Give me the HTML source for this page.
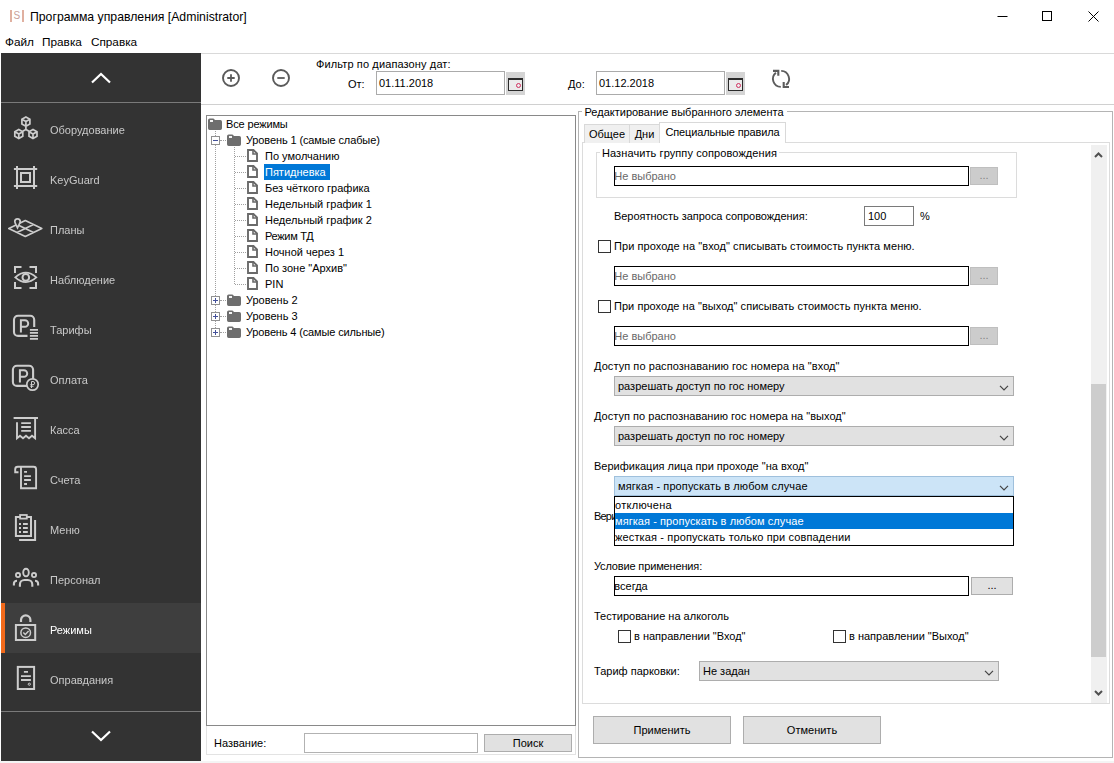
<!DOCTYPE html>
<html><head><meta charset="utf-8">
<style>
*{box-sizing:border-box;margin:0;padding:0}
html,body{width:1114px;height:763px;overflow:hidden;background:#fff}
body{font-family:"Liberation Sans",sans-serif;font-size:11px;color:#000;position:relative}
.a{position:absolute;white-space:pre}
.t{position:absolute;white-space:pre;line-height:14px;height:14px}
#sb{position:absolute;left:1px;top:53px;width:200px;height:708px;background:#333}
.si{position:absolute;left:0;width:200px;height:50px}
.si span{will-change:transform;position:absolute;left:49px;top:20px;line-height:14px;color:#c9c9c9;font-size:11px;white-space:pre}
.si svg{position:absolute;left:9px;top:9px;width:32px;height:32px;overflow:visible;fill:none;stroke:#cdcdcd;stroke-width:1.6}
.si.sel{background:#3e3e3e}
.si.sel span{color:#fff}
.hl{position:absolute;height:1px;background:#7a7a7a;left:0;width:200px}
.inp{position:absolute;border:1px solid #000;background:#fff;height:20px;line-height:18px;padding-left:0;text-indent:-.7px;color:#686868;white-space:pre}
.btn{position:absolute;background:#e1e1e1;border:1px solid #adadad;text-align:center;white-space:pre}
.dbtn{position:absolute;background:#ccc;border:1px solid #bfbfbf;color:#838383;text-align:center;line-height:15px;width:28px;height:18px}
.cmb{position:absolute;background:#e1e1e1;border:1px solid #adadad;height:20px;line-height:18px;padding-left:3px;white-space:pre}
.cmb svg{position:absolute;right:4px;top:8px}
.cb{position:absolute;width:13px;height:13px;border:1px solid #333;background:#fff}
.tr{position:absolute;white-space:pre;line-height:16px;height:16px}
.fo{position:absolute;width:14px;height:12px}
.fi{position:absolute;width:11px;height:13px}
.ex{position:absolute;width:9px;height:9px;border:1px solid #919191;background:#fff}
.ex:before{content:"";position:absolute;left:1px;top:3px;width:5px;height:1px;background:#44519a}
.ex.p:after{content:"";position:absolute;left:3px;top:1px;width:1px;height:5px;background:#44519a}
.dv{position:absolute;width:0;border-left:1px dotted #a0a0a0}
.dh{position:absolute;height:0;border-top:1px dotted #a0a0a0}
.cal{width:19px;height:23px;background:#d4d4d4}
.cal:before{content:"";position:absolute;left:2px;top:6px;width:13px;height:10px;border:1px solid #2b2b2b;border-top-width:2px;background:#ececec}
.cal:after{content:"";position:absolute;left:9.500px;top:10.500px;width:3.500px;height:3.500px;border:1px solid #d03060;border-radius:50%}
</style></head><body>
<!-- title bar -->
<div class="a" style="left:10px;top:10px;width:2px;height:12px;background:#e0b0a0"></div>
<div class="a" style="left:22px;top:10px;width:2px;height:12px;background:#e0b0a0"></div>
<div class="a" style="left:13.5px;top:9.500px;font-size:10px;line-height:12px;color:#c9a09a">S</div>
<div class="a" id="title" style="left:30px;top:9px;font-size:12.25px;line-height:16px">Программа управления [Administrator]</div>
<svg class="a" style="left:990px;top:0;width:124px;height:31px" viewBox="0 0 124 31">
<path d="M7.5 16.5h10" stroke="#000" stroke-width="1" fill="none"/>
<rect x="52.5" y="11.5" width="9" height="9" stroke="#000" stroke-width="1" fill="none"/>
<path d="M98.500 11.500l10 10M108.500 11.500l-10 10" stroke="#000" stroke-width="1" fill="none"/>
</svg>
<div class="a" id="menu" style="left:5px;top:34px;font-size:11.8px;line-height:16px"><span>Файл</span><span style="margin-left:8px">Правка</span><span style="margin-left:9px">Справка</span></div>
<div class="a" style="left:201px;top:53px;width:913px;height:1px;background:#d9d9d9"></div>
<div class="a" style="left:0;top:761px;width:1114px;height:2px;background:#f4f4f4"></div>

<div id="sb">
<svg class="a" style="left:87px;top:18px;width:26px;height:14px" viewBox="0 0 26 14"><path d="M4 11.500l9-8.500l9 8.500" fill="none" stroke="#fff" stroke-width="2.200"/></svg>
<div class="hl" style="top:49px"></div>
<div class="si" style="top:50px"><!--ICON:Оборудование--><svg viewBox="0 0 32 32"><path d="M15.9 5.0 L19.9 7.3 L19.9 11.9 L15.9 14.2 L11.9 11.9 L11.9 7.3Z M15.9 9.6V14.2 M15.9 9.6L11.9 7.3 M15.9 9.6L19.9 7.3 M8.8 17.4 L12.8 19.7 L12.8 24.3 L8.8 26.6 L4.8 24.3 L4.8 19.7Z M8.8 22.0V26.6 M8.8 22.0L4.8 19.7 M8.8 22.0L12.8 19.7 M23.0 17.4 L27.0 19.7 L27.0 24.3 L23.0 26.6 L19.0 24.3 L19.0 19.7Z M23.0 22.0V26.6 M23.0 22.0L19.0 19.7 M23.0 22.0L27.0 19.7 M15.9 14.200V17.500L12.200 19.600M15.900 17.500L19.600 19.600" stroke-width="1.700"/></svg><!--/ICON--><span>Оборудование</span></div>
<div class="si" style="top:100px"><!--ICON:KeyGuard--><svg viewBox="0 0 32 32"><path d="M3.900 7H27.200M3.900 24H27.200M7 3.900V26.900M24 3.900V26.900" stroke-width="2"/><rect x="11" y="11" width="9" height="9" stroke-width="2"/></svg><!--/ICON--><span>KeyGuard</span></div>
<div class="si" style="top:150px"><!--ICON:Планы--><svg viewBox="0 0 32 32"><path d="M-1.200 16.500L15.300 8.600L31.800 16.500L15.300 24.400ZM7 20.500L23.500 12.500M7 12.500L23.500 20.500" stroke-width="1.700" stroke-linejoin="round"/><path d="M7.500 15.800C6 12.500 4.800 11.200 4.800 9.600a2.700 2.700 0 0 1 5.400 0C10.200 11.200 9 12.500 7.500 15.800Z" fill="#333" stroke-width="1.700"/></svg><!--/ICON--><span>Планы</span></div>
<div class="si" style="top:200px"><!--ICON:Наблюдение--><svg viewBox="0 0 32 32"><path d="M5 11V5H11.500M19.500 5H26V11M26 20V26H19.500M11.500 26H5V20" stroke-width="2"/><path d="M5.300 15.400Q10.500 10.700 15.800 10.700Q21 10.700 26.300 15.400Q21 20.100 15.800 20.100Q10.500 20.100 5.300 15.400Z" stroke-width="1.800" fill="#333"/><circle cx="15.800" cy="15.400" r="3.300" stroke-width="2"/></svg><!--/ICON--><span>Наблюдение</span></div>
<div class="si" style="top:250px"><!--ICON:Тарифы--><svg viewBox="0 0 32 32"><path d="M17.500 23.900H8A4 4 0 0 1 4 19.900V7.700A4 4 0 0 1 8 3.700H20.200A4 4 0 0 1 24.200 7.700V15" stroke-width="2.100"/><path d="M10.900 20.600V8.200H14.900a3.300 3.300 0 0 1 0 6.600H10.900" stroke-width="2"/><path d="M19.900 17.800H28M19.900 20.800H28M19.900 23.800H28M19.900 26.800H28" stroke-width="1.800"/></svg><!--/ICON--><span>Тарифы</span></div>
<div class="si" style="top:300px"><!--ICON:Оплата--><svg viewBox="0 0 32 32"><rect x="2.900" y="3.700" width="20.200" height="20.200" rx="4" stroke-width="2.100"/><path d="M9.900 20.600V8.200H13.900a3.300 3.300 0 0 1 0 6.600H9.900" stroke-width="2"/><circle cx="22.500" cy="22.500" r="5.700" fill="#333" stroke-width="1.700"/><path d="M21.500 26V19.500H23a1.600 1.600 0 0 1 0 3.200H20.300M20.300 24.300H23.500" stroke-width="1"/></svg><!--/ICON--><span>Оплата</span></div>
<div class="si" style="top:350px"><!--ICON:Касса--><svg viewBox="0 0 32 32"><path d="M3.600 6H28" stroke-width="2"/><path d="M7 10.200V26.200L10 23.700L13 26.200L16 23.700L19 26.200L22 23.700L25.100 26.200V6" stroke-width="1.900" stroke-linejoin="miter"/><path d="M11.200 11.200H20.900M11.200 15H20.900M11.200 18.900H20.900" stroke-width="1.800"/></svg><!--/ICON--><span>Касса</span></div>
<div class="si" style="top:400px"><!--ICON:Счета--><svg viewBox="0 0 32 32"><path d="M8.500 10.200H5.200V7.200Q5.200 4.700 7.700 4.700H23.600Q26.100 4.700 26.100 7.200V26.200H11V4.700" stroke-width="1.900"/><path d="M14.100 9.900H17M14.100 14.100H20.900M14.100 18H20.900M14.100 22H17" stroke-width="1.800"/></svg><!--/ICON--><span>Счета</span></div>
<div class="si" style="top:450px"><!--ICON:Меню--><svg viewBox="0 0 32 32"><path d="M10.100 4.900H5.900V23.900H21V4.900H16.800" stroke-width="2"/><rect x="10.100" y="3" width="6.700" height="3.600" stroke-width="1.800"/><path d="M25.100 8V28H9.100" stroke-width="2"/><path d="M9 12H11M13 12H17.800M9 16H11M13 16H17.800M9 20H11M13 20H17.800" stroke-width="1.900"/></svg><!--/ICON--><span>Меню</span></div>
<div class="si" style="top:500px"><!--ICON:Персонал--><svg viewBox="0 0 32 32"><ellipse cx="16" cy="10.500" rx="2.800" ry="3.800" stroke-width="1.900"/><circle cx="8" cy="13.100" r="2.100" stroke-width="1.800"/><circle cx="24" cy="13.100" r="2.100" stroke-width="1.800"/><path d="M9.900 24.700V22.500a4.500 4.500 0 0 1 4.500-4.500h3.400a4.500 4.500 0 0 1 4.500 4.500V24.700" stroke-width="2.100"/><path d="M3.900 23.400V21.800a3.100 3.100 0 0 1 3.100-3.100M28.100 23.400V21.800a3.100 3.100 0 0 0-3.100-3.100" stroke-width="2.100"/></svg><!--/ICON--><span>Персонал</span></div>
<div class="si sel" style="top:550px"><!--ICON:Режимы--><svg viewBox="0 0 32 32"><path d="M11 10V8a4.700 4.700 0 0 1 9.400 0V10" stroke-width="2.200"/><rect x="5.900" y="13" width="19.300" height="15" stroke-width="2"/><circle cx="15.700" cy="20.700" r="4.800" stroke-width="1.500"/><path d="M13.300 20.400l2 2l3.300-3.400" stroke-width="1.400"/></svg><!--/ICON--><span>Режимы</span></div>
<div class="si" style="top:600px"><!--ICON:Оправдания--><svg viewBox="0 0 32 32"><rect x="7.800" y="4.900" width="16.300" height="22.100" stroke-width="2"/><path d="M13.900 9.900H18M11 14.100H20.900M11 18H20.900" stroke-width="1.900"/><circle cx="19.300" cy="22.200" r="1.100" stroke-width="1"/></svg><!--/ICON--><span>Оправдания</span></div>
<div class="a" style="left:0;top:550px;width:4px;height:50px;background:#f26a1b"></div>
<div class="hl" style="top:658px"></div>
<svg class="a" style="left:87px;top:676px;width:26px;height:14px" viewBox="0 0 26 14"><path d="M4 2.500l9 8.500l9-8.500" fill="none" stroke="#fff" stroke-width="2.200"/></svg>
</div>
<!-- toolbar -->
<svg class="a" style="left:220px;top:67px;width:22px;height:22px" viewBox="0 0 22 22"><circle cx="11" cy="11" r="8" fill="none" stroke="#5a5a5a" stroke-width="1.900"/><path d="M7.300 11h7.400M11 7.300v7.400" stroke="#5a5a5a" stroke-width="1.800"/></svg>
<svg class="a" style="left:270px;top:67px;width:22px;height:22px" viewBox="0 0 22 22"><circle cx="11" cy="11" r="8" fill="none" stroke="#5a5a5a" stroke-width="1.900"/><path d="M7.300 11h7.400" stroke="#5a5a5a" stroke-width="1.800"/></svg>
<div class="t" style="left:316px;top:57px;letter-spacing:.12px">Фильтр по диапазону дат:</div>
<div class="t" style="left:348px;top:77px">От:</div>
<div class="a" style="left:376px;top:71px;width:129px;height:24px;border:1px solid #ababab;background:#fff;line-height:22px;padding-left:2px">01.11.2018</div>
<div class="a cal" style="left:506px;top:72px"></div>
<div class="t" style="left:568px;top:77px">До:</div>
<div class="a" style="left:596px;top:71px;width:129px;height:24px;border:1px solid #ababab;background:#fff;line-height:22px;padding-left:2px">01.12.2018</div>
<div class="a cal" style="left:726px;top:72px"></div>
<svg class="a" style="left:770px;top:68px;width:22px;height:22px" viewBox="0 0 22 22" fill="none" stroke="#5c5c5c" stroke-width="1.900"><path d="M10.800 18.900A8 8 0 0 1 5.900 4.700"/><path d="M11.200 2.900A8 8 0 0 1 16.100 17.100"/><path d="M3 2.900H8.300V7.800" stroke-width="2.100"/><path d="M19 19H13.700V14.100" stroke-width="2.100"/></svg>
<div class="a" style="left:201px;top:104px;width:913px;height:1px;background:#d0d0d0"></div>

<!-- tree -->
<div class="a" style="left:206px;top:115px;width:370px;height:611px;border:1px solid #898989;background:#fff"></div>
<svg class="fo" style="left:208px;top:118px" viewBox="0 0 14 12"><path d="M0 2.200Q0 .5 1.700 .5H5.200Q6.500 .5 6.800 2H12.300Q14 2 14 3.700V10.300Q14 12 12.300 12H1.700Q0 12 0 10.300Z" fill="#6e6e6e"/><rect x="2" y="2" width="3" height="2" fill="#f4f4f4"/></svg>
<div class="tr" style="left:226px;top:116px;letter-spacing:-.15px">Все режимы</div>
<div class="dv" style="left:215px;top:131px;height:201px"></div>
<div class="dh" style="left:220px;top:140px;width:8px"></div>
<div class="ex" style="left:211px;top:136px"></div>
<svg class="fo" style="left:227px;top:134px" viewBox="0 0 14 12"><path d="M0 2.200Q0 .5 1.700 .5H5.200Q6.500 .5 6.800 2H12.300Q14 2 14 3.700V10.300Q14 12 12.300 12H1.700Q0 12 0 10.300Z" fill="#6e6e6e"/><rect x="2" y="2" width="3" height="2" fill="#f4f4f4"/></svg>
<div class="tr" style="left:246px;top:132px;letter-spacing:-.12px">Уровень 1 (самые слабые)</div>
<div class="dh" style="left:220px;top:300px;width:8px"></div>
<div class="ex p" style="left:211px;top:296px"></div>
<svg class="fo" style="left:227px;top:294px" viewBox="0 0 14 12"><path d="M0 2.200Q0 .5 1.700 .5H5.200Q6.500 .5 6.800 2H12.300Q14 2 14 3.700V10.300Q14 12 12.300 12H1.700Q0 12 0 10.300Z" fill="#6e6e6e"/><rect x="2" y="2" width="3" height="2" fill="#f4f4f4"/></svg>
<div class="tr" style="left:246px;top:292px">Уровень 2</div>
<div class="dh" style="left:220px;top:316px;width:8px"></div>
<div class="ex p" style="left:211px;top:312px"></div>
<svg class="fo" style="left:227px;top:310px" viewBox="0 0 14 12"><path d="M0 2.200Q0 .5 1.700 .5H5.200Q6.500 .5 6.800 2H12.300Q14 2 14 3.700V10.300Q14 12 12.300 12H1.700Q0 12 0 10.300Z" fill="#6e6e6e"/><rect x="2" y="2" width="3" height="2" fill="#f4f4f4"/></svg>
<div class="tr" style="left:246px;top:308px">Уровень 3</div>
<div class="dh" style="left:220px;top:332px;width:8px"></div>
<div class="ex p" style="left:211px;top:328px"></div>
<svg class="fo" style="left:227px;top:326px" viewBox="0 0 14 12"><path d="M0 2.200Q0 .5 1.700 .5H5.200Q6.500 .5 6.800 2H12.300Q14 2 14 3.700V10.300Q14 12 12.300 12H1.700Q0 12 0 10.300Z" fill="#6e6e6e"/><rect x="2" y="2" width="3" height="2" fill="#f4f4f4"/></svg>
<div class="tr" style="left:246px;top:324px;letter-spacing:-.14px">Уровень 4 (самые сильные)</div>
<div class="dv" style="left:234px;top:147px;height:137px"></div>
<div class="dh" style="left:235px;top:156px;width:11px"></div>
<svg class="fi" style="left:247px;top:149px" viewBox="0 0 11 13"><path d="M1 1H6.500L10 4.500V12H1Z" fill="#fff" stroke="#6a6a6a" stroke-width="1.900"/><path d="M6 1V5H10" fill="none" stroke="#6a6a6a" stroke-width="1.600"/></svg>
<div class="tr" style="left:265px;top:148px">По умолчанию</div>
<div class="dh" style="left:235px;top:172px;width:11px"></div>
<svg class="fi" style="left:247px;top:165px" viewBox="0 0 11 13"><path d="M1 1H6.500L10 4.500V12H1Z" fill="#fff" stroke="#6a6a6a" stroke-width="1.900"/><path d="M6 1V5H10" fill="none" stroke="#6a6a6a" stroke-width="1.600"/></svg>
<div class="tr" style="left:264px;top:164px;width:66px;background:#0078d7;color:#fff;padding-left:1px">Пятидневка</div>
<div class="dh" style="left:235px;top:188px;width:11px"></div>
<svg class="fi" style="left:247px;top:181px" viewBox="0 0 11 13"><path d="M1 1H6.500L10 4.500V12H1Z" fill="#fff" stroke="#6a6a6a" stroke-width="1.900"/><path d="M6 1V5H10" fill="none" stroke="#6a6a6a" stroke-width="1.600"/></svg>
<div class="tr" style="left:265px;top:180px">Без чёткого графика</div>
<div class="dh" style="left:235px;top:204px;width:11px"></div>
<svg class="fi" style="left:247px;top:197px" viewBox="0 0 11 13"><path d="M1 1H6.500L10 4.500V12H1Z" fill="#fff" stroke="#6a6a6a" stroke-width="1.900"/><path d="M6 1V5H10" fill="none" stroke="#6a6a6a" stroke-width="1.600"/></svg>
<div class="tr" style="left:265px;top:196px">Недельный график 1</div>
<div class="dh" style="left:235px;top:220px;width:11px"></div>
<svg class="fi" style="left:247px;top:213px" viewBox="0 0 11 13"><path d="M1 1H6.500L10 4.500V12H1Z" fill="#fff" stroke="#6a6a6a" stroke-width="1.900"/><path d="M6 1V5H10" fill="none" stroke="#6a6a6a" stroke-width="1.600"/></svg>
<div class="tr" style="left:265px;top:212px">Недельный график 2</div>
<div class="dh" style="left:235px;top:236px;width:11px"></div>
<svg class="fi" style="left:247px;top:229px" viewBox="0 0 11 13"><path d="M1 1H6.500L10 4.500V12H1Z" fill="#fff" stroke="#6a6a6a" stroke-width="1.900"/><path d="M6 1V5H10" fill="none" stroke="#6a6a6a" stroke-width="1.600"/></svg>
<div class="tr" style="left:265px;top:228px;letter-spacing:-.3px">Режим ТД</div>
<div class="dh" style="left:235px;top:252px;width:11px"></div>
<svg class="fi" style="left:247px;top:245px" viewBox="0 0 11 13"><path d="M1 1H6.500L10 4.500V12H1Z" fill="#fff" stroke="#6a6a6a" stroke-width="1.900"/><path d="M6 1V5H10" fill="none" stroke="#6a6a6a" stroke-width="1.600"/></svg>
<div class="tr" style="left:265px;top:244px">Ночной через 1</div>
<div class="dh" style="left:235px;top:268px;width:11px"></div>
<svg class="fi" style="left:247px;top:261px" viewBox="0 0 11 13"><path d="M1 1H6.500L10 4.500V12H1Z" fill="#fff" stroke="#6a6a6a" stroke-width="1.900"/><path d="M6 1V5H10" fill="none" stroke="#6a6a6a" stroke-width="1.600"/></svg>
<div class="tr" style="left:265px;top:260px">По зоне "Архив"</div>
<div class="dh" style="left:235px;top:284px;width:11px"></div>
<svg class="fi" style="left:247px;top:277px" viewBox="0 0 11 13"><path d="M1 1H6.500L10 4.500V12H1Z" fill="#fff" stroke="#6a6a6a" stroke-width="1.900"/><path d="M6 1V5H10" fill="none" stroke="#6a6a6a" stroke-width="1.600"/></svg>
<div class="tr" style="left:265px;top:276px">PIN</div>
<div class="a" style="left:206px;top:726px;width:370px;height:29px;border:1px solid #e3e3e3;border-top:none"></div>
<div class="t" style="left:214px;top:736px">Название:</div>
<div class="a" style="left:304px;top:733px;width:174px;height:20px;border:1px solid #b2b2b2;background:#fff"></div>
<div class="btn" style="left:484px;top:734px;width:88px;height:18px;line-height:16px">Поиск</div>
<!-- right group -->
<div class="a" style="left:578px;top:111px;width:535px;height:647px;border:1px solid #a0a0a0;border-color:#b4b4b4"></div>
<div class="t" style="left:581.500px;top:105px;background:#fff;padding:0 3px 0 3px">Редактирование выбранного элемента</div>
<!-- tabs -->
<div class="a" style="left:582px;top:142px;width:528px;height:562px;border:1px solid #dcdcdc;background:#fff"></div>
<div class="a" style="left:584px;top:124px;width:46px;height:19px;background:#f0f0f0;border:1px solid #d9d9d9;border-bottom:none;text-align:center;line-height:18px">Общее</div>
<div class="a" style="left:629px;top:124px;width:31px;height:19px;background:#f0f0f0;border:1px solid #d9d9d9;border-bottom:none;text-align:center;line-height:18px">Дни</div>
<div class="a" style="left:659px;top:122px;width:127px;height:21px;background:#fff;border:1px solid #d9d9d9;border-bottom:none;text-align:center;line-height:18px;letter-spacing:-.13px">Специальные правила</div>
<!-- scrollbar -->
<div class="a" style="left:1091px;top:145px;width:16px;height:558px;background:#f0f0f0"></div>
<div class="a" style="left:1091px;top:384px;width:15px;height:273px;background:#cdcdcd"></div>
<svg class="a" style="left:1094px;top:151px;width:9px;height:8px" viewBox="0 0 9 8"><path d="M1 6l3.500-3.500l3.500 3.500" fill="none" stroke="#505050" stroke-width="2"/></svg>
<svg class="a" style="left:1094px;top:689px;width:9px;height:8px" viewBox="0 0 9 8"><path d="M1 2l3.500 3.500l3.500-3.500" fill="none" stroke="#505050" stroke-width="2"/></svg>
<!-- inner group -->
<div class="a" style="left:596px;top:152px;width:421px;height:46px;border:1px solid #dcdcdc"></div>
<div class="t" style="left:600px;top:146px;background:#fff;padding:0 2px;letter-spacing:.09px">Назначить группу сопровождения</div>
<div class="inp" style="left:614px;top:166px;width:355px">Не выбрано</div>
<div class="dbtn" style="left:970px;top:167px">...</div>
<div class="t" style="left:614px;top:209px;letter-spacing:-.04px">Вероятность запроса сопровождения:</div>
<div class="a" style="left:864px;top:206px;width:50px;height:20px;border:1px solid #7a7a7a;background:#fff;line-height:18px;padding-left:3px">100</div>
<div class="t" style="left:920px;top:209px">%</div>
<div class="cb" style="left:598px;top:240px"></div>
<div class="t" style="left:614px;top:239px;letter-spacing:.06px">При проходе на "вход" списывать стоимость пункта меню.</div>
<div class="inp" style="left:614px;top:266px;width:355px">Не выбрано</div>
<div class="dbtn" style="left:970px;top:267px">...</div>
<div class="cb" style="left:598px;top:300px"></div>
<div class="t" style="left:614px;top:299px;letter-spacing:.04px">При проходе на "выход" списывать стоимость пункта меню.</div>
<div class="inp" style="left:614px;top:326px;width:355px">Не выбрано</div>
<div class="dbtn" style="left:970px;top:327px">...</div>
<div class="t" style="left:594px;top:359px;letter-spacing:.07px">Доступ по распознаванию гос номера на "вход"</div>
<div class="cmb" style="left:614px;top:376px;width:400px">разрешать доступ по гос номеру<svg width="10" height="6" viewBox="0 0 10 6"><path d="M1 .8l4 4l4-4" fill="none" stroke="#444" stroke-width="1.200"/></svg></div>
<div class="t" style="left:594px;top:409px;letter-spacing:.03px">Доступ по распознаванию гос номера на "выход"</div>
<div class="cmb" style="left:614px;top:426px;width:400px">разрешать доступ по гос номеру<svg width="10" height="6" viewBox="0 0 10 6"><path d="M1 .8l4 4l4-4" fill="none" stroke="#444" stroke-width="1.200"/></svg></div>
<div class="t" style="left:594px;top:459px">Верификация лица при проходе "на вход"</div>
<div class="cmb" style="left:614px;top:476px;width:400px;background:#cce4f7;border-color:#9fc0dc;letter-spacing:.1px">мягкая - пропускать в любом случае<svg width="10" height="6" viewBox="0 0 10 6"><path d="M1 .8l4 4l4-4" fill="none" stroke="#444" stroke-width="1.200"/></svg></div>
<div class="t" style="left:594px;top:509px;letter-spacing:-.8px">Вери</div>
<!-- dropdown list -->
<div class="a" style="left:614px;top:496px;width:400px;height:50px;border:1px solid #000;background:#fff"></div>
<div class="a" style="left:615px;top:497px;height:16px;line-height:16px;letter-spacing:.3px">отключена</div>
<div class="a" style="left:615px;top:513px;width:398px;height:16px;line-height:16px;background:#0078d7;color:#fff;letter-spacing:.07px">мягкая - пропускать в любом случае</div>
<div class="a" style="left:615px;top:529px;height:16px;line-height:16px;letter-spacing:.14px">жесткая - пропускать только при совпадении</div>
<div class="t" style="left:594px;top:559px;letter-spacing:-.15px">Условие применения:</div>
<div class="inp" style="left:614px;top:576px;width:355px;color:#000">всегда</div>
<div class="btn" style="left:971px;top:577px;width:42px;height:18px;line-height:14px">...</div>
<div class="t" style="left:594px;top:609px">Тестирование на алкоголь</div>
<div class="cb" style="left:618px;top:630px"></div>
<div class="t" style="left:634px;top:629px">в направлении "Вход"</div>
<div class="cb" style="left:833px;top:630px"></div>
<div class="t" style="left:849px;top:629px">в направлении "Выход"</div>
<div class="t" style="left:594px;top:664px">Тариф парковки:</div>
<div class="cmb" style="left:699px;top:661px;width:300px">Не задан<svg width="10" height="6" viewBox="0 0 10 6"><path d="M1 .8l4 4l4-4" fill="none" stroke="#444" stroke-width="1.200"/></svg></div>
<div class="btn" style="left:593px;top:716px;width:138px;height:28px;line-height:26px">Применить</div>
<div class="btn" style="left:743px;top:716px;width:138px;height:28px;line-height:26px">Отменить</div>

</body></html>
